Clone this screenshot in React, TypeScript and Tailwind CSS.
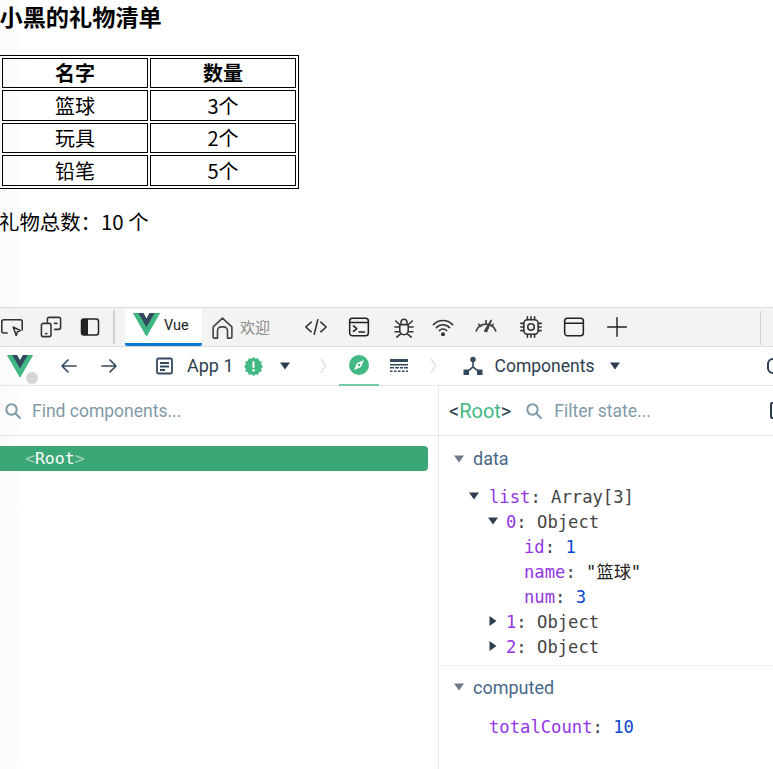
import React from "react";

const cjk = "font-['Noto_Sans_CJK_SC','Microsoft_YaHei',sans-serif]";
const ui = "font-['Roboto','Noto_Sans_CJK_SC',sans-serif]";
const mono = "font-['DejaVu_Sans_Mono','Noto_Sans_CJK_SC',monospace]";

const gifts = [
  ["篮球", "3个", "h-[31px]"],
  ["玩具", "2个", "h-[30px]"],
  ["铅笔", "5个", "h-[31px]"],
];

const sealPoints = Array.from({ length: 24 }, (_, i) => {
  const r = i % 2 === 0 ? 10 : 8.4;
  const a = (i * Math.PI) / 12;
  return `${(10 + r * Math.cos(a)).toFixed(2)},${(10 + r * Math.sin(a)).toFixed(2)}`;
}).join(" ");

const VueLogo = ({ size, className }: { size: number; className?: string }) => (
  <svg width={size} height={size * 0.87} viewBox="0 0 256 221" className={className}>
    <path d="M204.8 0H256L128 220.8 0 0h97.9L128 51.2 157.4 0z" fill="#41b883" />
    <path d="M0 0l128 220.8L256 0h-51.2L128 132.5 50.6 0z" fill="#41b883" />
    <path d="M50.6 0L128 133.1 204.8 0h-47.4L128 51.2 97.9 0z" fill="#35495e" />
  </svg>
);

const Stroke = ({ size = 20, children, color = "#333", width = 1.3 }: { size?: number; children: React.ReactNode; color?: string; width?: number }) => (
  <svg width={size} height={size} viewBox="0 0 20 20" fill="none" stroke={color} strokeWidth={width} strokeLinecap="round" strokeLinejoin="round">
    {children}
  </svg>
);

const Caret = ({ open = true, color = "#2c3e50", className = "" }: { open?: boolean; color?: string; className?: string }) => (
  <svg width="10" height="10" viewBox="0 0 10 10" className={className}>
    <path d={open ? "M0 1.500h10L5 8.500z" : "M1.500 0v10L8.500 5z"} fill={color} />
  </svg>
);

const Search = ({ className = "" }: { className?: string }) => (
  <svg width="18" height="18" viewBox="0 0 18 18" fill="none" stroke="#7f9aa8" strokeWidth="2" className={className}>
    <circle cx="7.500" cy="7.500" r="5.200" />
    <path d="M11.500 11.500L16.500 16.500" />
  </svg>
);

const Chevron = () => (
  <svg width="10" height="18" viewBox="0 0 10 18" fill="none" stroke="#d5d8dc" strokeWidth="1.200">
    <path d="M3 2l4.500 7L3 16" />
  </svg>
);

const Row = ({ children, indent }: { children: React.ReactNode; indent: string }) => (
  <div className={`flex items-center h-[25px] ${indent}`}>{children}</div>
);

const Key = ({ children }: { children: React.ReactNode }) => <span className="text-[#9135e6]">{children}</span>;

export default function App() {
  return (
    <div className="w-[773px] h-[769px] overflow-hidden bg-linear-to-r from-[#fafafa] to-white to-[28px] flex flex-col">
      <div className={`h-[307px] shrink-0 text-black ${cjk}`}>
        <h1 className="text-[23.200px] font-bold leading-[32px] h-[55px] -ml-[0.500px]">小黑的礼物清单</h1>
        <table className="border border-black border-separate border-spacing-[2px] w-[300px] -ml-[1px] table-fixed text-[20px] text-center">
          <thead>
            <tr>
              <th className="border border-black h-[30px] p-0 leading-none font-bold">名字</th>
              <th className="border border-black h-[30px] p-0 leading-none font-bold">数量</th>
            </tr>
          </thead>
          <tbody>
            {gifts.map((g) => (
              <tr key={g[0]}>
                <td className={`border border-black p-0 leading-none ${g[2]}`}>{g[0]}</td>
                <td className={`border border-black p-0 leading-none ${g[2]}`}>{g[1]}</td>
              </tr>
            ))}
          </tbody>
        </table>
        <p className="text-[20.400px] leading-[30px] mt-[17px] -ml-[1px]">礼物总数：10 个</p>
      </div>

      {/* devtools tab strip */}
      <div className="h-[40px] shrink-0 bg-[#f3f3f3] border-y border-[#dcdcdc] flex items-center relative">
        <div className="w-[24px] flex justify-center">
          <Stroke size={24}>
            <path d="M6 15H3a1.500 1.500 0 01-1.500-1.500v-8A1.500 1.500 0 013 4h14a1.500 1.500 0 011.500 1.500v7" />
            <path d="M11 10l6 3-2.500 1-1 3z" />
          </Stroke>
        </div>
        <div className="w-[24px] ml-[15px] flex justify-center">
          <Stroke size={24}>
            <path d="M7 6V3.500A1.500 1.500 0 018.500 2h8A1.500 1.500 0 0118 3.500v7a1.500 1.500 0 01-1.500 1.500H13" />
            <rect x="2" y="7" width="8" height="11" rx="1.500" />
            <path d="M5.500 15.500h1M13 7h2" />
          </Stroke>
        </div>
        <div className="ml-[17px]">
          <svg width="20" height="20" viewBox="0 0 20 20">
            <rect x="1.500" y="2" width="17" height="16" rx="2.500" fill="none" stroke="#222" strokeWidth="1.500" />
            <path d="M4 2h4v16H4a2.500 2.500 0 01-2.500-2.500v-11A2.500 2.500 0 014 2z" fill="#222" />
          </svg>
        </div>
        <div className="w-[2px] h-[34px] bg-[#d0d0d0] ml-[13px]" />
        <div className="ml-[10px] w-[77px] h-[37px] mt-[1px] bg-white border-b-[3px] border-[#0078d4] rounded-b-[2px] flex items-center pl-[8px] gap-[4px]">
          <VueLogo size={27} className="-mt-[2px]" />
          <span className={`text-[14.500px] text-[#222] ${ui}`}>Vue</span>
        </div>
        <div className="ml-[8px] flex items-center gap-[5px] w-[84px]">
          <Stroke size={25} color="#444">
            <path d="M2.500 9.500L10 2.500l7.500 7v8a1 1 0 01-1 1H14v-6a3 3 0 00-3-3H9a3 3 0 00-3 3v6H3.500a1 1 0 01-1-1z" />
          </Stroke>
          <span className={`text-[15px] text-[#8a8a8a] ${cjk}`}>欢迎</span>
        </div>
        <div className="ml-[10px]">
          <Stroke size={24} color="#333">
            <path d="M6 6l-4.500 4L6 14M14 6l4.500 4L14 14M11.500 4l-3 12" />
          </Stroke>
        </div>
        <div className="ml-[20px]">
          <Stroke size={22} color="#222" width={1.400}>
            <rect x="1.500" y="2" width="17" height="16" rx="2.500" />
            <path d="M1.500 6h17M5 9l3 2.500L5 14M10 14.500h5" />
          </Stroke>
        </div>
        <div className="ml-[22px]">
          <Stroke size={24} color="#333">
            <path d="M6.500 8h7v5a3.500 3.500 0 01-7 0zM7.500 8V6a2.500 2.500 0 015 0v2M6.500 10H2.500M13.500 10h4M6.500 14h-4M13.500 14h4M6.500 8L3 5M13.500 8L17 5M7 16l-3 2.500M13 16l3 2.500" />
          </Stroke>
        </div>
        <div className="ml-[15px]">
          <Stroke size={24} color="#333">
            <path d="M2 8a11 11 0 0116 0M4.500 10.500a7.500 7.500 0 0111 0M7 13a4 4 0 016 0" />
            <circle cx="10" cy="16" r="1" fill="#333" />
          </Stroke>
        </div>
        <div className="ml-[18px]">
          <Stroke size={26} color="#444">
            <path d="M2.500 13a8 8 0 0115 0M4.500 8l1.500 1.500M10 5v2M14 5l-3.500 8.500L9 13zM15.500 8L14.500 9.500" />
          </Stroke>
        </div>
        <div className="ml-[20px]">
          <Stroke size={24} color="#333">
            <rect x="4" y="4" width="12" height="12" rx="3" />
            <circle cx="10" cy="10" r="2.700" />
            <path d="M7 1.500V4M10 1.500V4M13 1.500V4M7 16v2.500M10 16v2.500M13 16v2.500M1.500 7H4M1.500 10H4M1.500 13H4M16 7h2.500M16 10h2.500M16 13h2.500" />
          </Stroke>
        </div>
        <div className="ml-[20px]">
          <Stroke size={22} color="#222" width={1.400}>
            <rect x="1.500" y="2" width="17" height="16" rx="2.500" />
            <path d="M1.500 6.500h17" />
          </Stroke>
        </div>
        <div className="ml-[21px]">
          <Stroke size={22} color="#222">
            <path d="M10 1.500v17M1.500 10h17" />
          </Stroke>
        </div>
        <div className="absolute left-[760px] top-[3px] w-[1px] h-[34px] bg-[#d0d0d0]" />
      </div>

      {/* vue devtools nav */}
      <div className={`h-[39px] shrink-0 border-b border-[#e4e7eb] flex items-center relative text-[#2c3e50] ${ui}`}>
        <div className="relative ml-[7px] w-[32px]">
          <VueLogo size={26} />
          <div className="absolute left-[19px] top-[17px] w-[12px] h-[12px] rounded-full bg-[#d4d4d4]" />
        </div>
        <div className="ml-[20px]">
          <Stroke size={20} color="#35495e" width={1.700}>
            <path d="M17 10H3.500M9 4l-6 6 6 6" />
          </Stroke>
        </div>
        <div className="ml-[20px]">
          <Stroke size={20} color="#35495e" width={1.700}>
            <path d="M3 10h13.500M11 4l6 6-6 6" />
          </Stroke>
        </div>
        <div className="ml-[36px]">
          <svg width="20" height="20" viewBox="0 0 20 20" fill="none" stroke="#35495e" strokeWidth="1.800">
            <rect x="2" y="2.500" width="15" height="15" rx="1.500" />
            <path d="M5 7h9M5 10.500h9M5 14h5" />
          </svg>
        </div>
        <span className="ml-[12px] text-[18px] -mt-[1px]">App 1</span>
        <div className="ml-[10px]">
          <svg width="19" height="19" viewBox="0 0 20 20">
            <polygon points={sealPoints} fill="#42b883" />
            <rect x="8.900" y="4.500" width="2.200" height="7" rx="0.800" fill="white" />
            <circle cx="10" cy="14" r="1.300" fill="white" />
          </svg>
        </div>
        <Caret className="ml-[17px]" />
        <div className="ml-[28px]"><Chevron /></div>
        <div className="ml-[11px] w-[40px] h-[39px] border-b-2 border-[#72c9a2] flex items-center justify-center">
          <svg width="20" height="20" viewBox="0 0 20 20">
            <circle cx="10" cy="10" r="10" fill="#42b883" />
            <path d="M15 5l-7 3-3 7 7-3z" fill="white" />
            <circle cx="10" cy="10" r="1.300" fill="#42b883" />
          </svg>
        </div>
        <div className="ml-[11px]">
          <svg width="18" height="16" viewBox="0 0 18 16" fill="#35495e">
            <rect x="0" y="1" width="18" height="3" />
            <rect x="0" y="6" width="18" height="1.500" />
            <path d="M0 9h4v1.500H0zM5 9h4v1.500H5zM10 9h3v1.500h-3zM14 9h4v1.500h-4zM0 12.500h2.500V14H0zM4 12.500h2.500V14H4zM8 12.500h2.500V14H8zM12 12.500h2.500V14H12zM16 12.500h2V14h-2z" />
          </svg>
        </div>
        <div className="ml-[20px]"><Chevron /></div>
        <div className="ml-[25px]">
          <svg width="20" height="20" viewBox="0 0 20 20" fill="#35495e">
            <circle cx="10" cy="3.500" r="2.700" />
            <path d="M9.200 5h1.600v5.500l6 5-1 1.200-5.800-4.800-5.800 4.800-1-1.200 6-5z" />
            <rect x="0.500" y="13.500" width="5.500" height="5.500" />
            <rect x="14" y="13.500" width="5.500" height="5.500" />
          </svg>
        </div>
        <span className="ml-[12px] text-[17.500px]">Components</span>
        <Caret className="ml-[16px]" />
        <div className="absolute left-[767px] top-[11px] w-[12px] h-[16px] rounded-full border-2 border-[#2c3e50]" />
      </div>

      <div className="flex-1 flex min-h-0">
        {/* component tree */}
        <div className="w-[439px] shrink-0 border-r border-[#e4e7eb]">
          <div className={`h-[50px] border-b border-[#e4e7eb] flex items-center pl-[4px] ${ui}`}>
            <Search />
            <span className="ml-[10px] mt-[1px] text-[17.500px] text-[#7f9aa8]">Find components...</span>
          </div>
          <div className="pt-[10px] pr-[10px]">
            <div className={`h-[25px] bg-[#3ba776] rounded-r-[4px] pl-[25px] pt-[1px] flex items-center text-[16.500px] text-white ${mono}`}>
              <span className="text-white/50">&lt;</span>Root<span className="text-white/50">&gt;</span>
            </div>
          </div>
        </div>

        {/* state inspector */}
        <div className="flex-1 min-w-0 relative">
          <div className={`h-[50px] border-b border-[#e4e7eb] flex items-center pl-[10px] ${ui}`}>
            <span className="text-[20px] text-[#2c3e50]">&lt;<span className="text-[#42b883]">Root</span>&gt;</span>
            <Search className="ml-[14px]" />
            <span className="ml-[11px] mt-[1px] text-[17.500px] text-[#7f9aa8]">Filter state...</span>
            <div className="absolute left-[331px] top-[16px] w-[8px] h-[17px] border-2 border-[#2c3e50] rounded-[2px]" />
          </div>

          <div className={`h-[45px] flex items-center pl-[15px] text-[18px] text-[#486887] ${ui}`}>
            <Caret color="#6c7a89" />
            <span className="ml-[9px] -mt-[1px]">data</span>
          </div>
          <div className={`text-[17.200px] text-[#444] pt-[4px] ${mono}`}>
            <Row indent="pl-[30px]">
              <Caret className="mr-[10px] -mt-[4px]" />
              <Key>list</Key>: Array[3]
            </Row>
            <Row indent="pl-[49px]">
              <Caret className="mr-[8px] -mt-[4px]" />
              <Key>0</Key>: Object
            </Row>
            <Row indent="pl-[85px]">
              <Key>id</Key>:&nbsp;<span className="text-[#0a45d0]">1</span>
            </Row>
            <Row indent="pl-[85px]">
              <Key>name</Key>:&nbsp;<span className="text-[#222]">"篮球"</span>
            </Row>
            <Row indent="pl-[85px]">
              <Key>num</Key>:&nbsp;<span className="text-[#0a45d0]">3</span>
            </Row>
            <Row indent="pl-[49px]">
              <Caret open={false} className="mr-[8px] -mt-[4px]" />
              <Key>1</Key>: Object
            </Row>
            <Row indent="pl-[49px]">
              <Caret open={false} className="mr-[8px] -mt-[4px]" />
              <Key>2</Key>: Object
            </Row>
          </div>
          <div className="border-t border-[#eceff2] mt-[5px]" />
          <div className={`h-[42px] flex items-center pl-[15px] text-[18px] text-[#486887] ${ui}`}>
            <Caret color="#6c7a89" />
            <span className="ml-[9px]">computed</span>
          </div>
          <div className={`text-[17.200px] text-[#444] pt-[7px] ${mono}`}>
            <Row indent="pl-[50px]">
              <Key>totalCount</Key>:&nbsp;<span className="text-[#0a45d0]">10</span>
            </Row>
          </div>
        </div>
      </div>
    </div>
  );
}
